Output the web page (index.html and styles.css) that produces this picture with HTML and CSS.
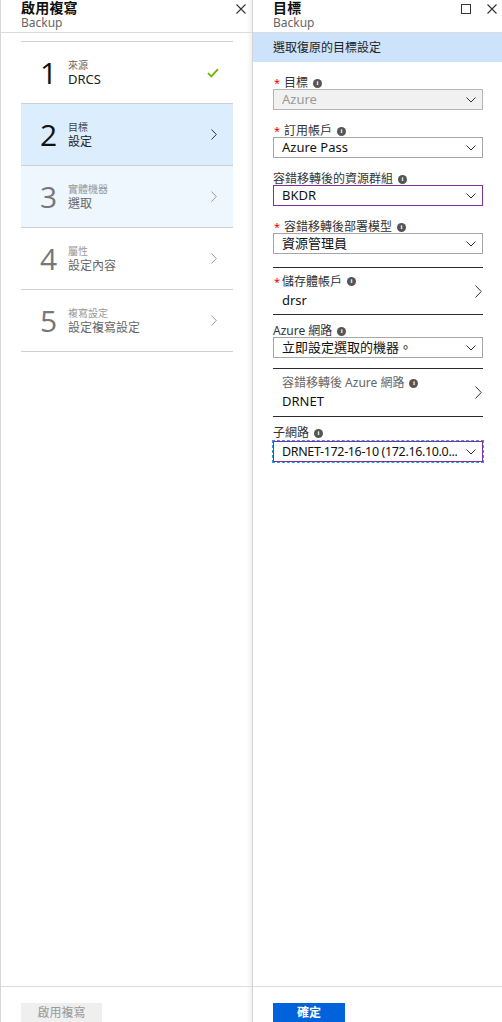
FILE: index.html
```html
<!DOCTYPE html>
<html lang="zh-Hant">
<head>
<meta charset="utf-8">
<link rel="stylesheet" href="styles.css">
</head>
<body>
<div class="app">
  <section class="blade blade-left">
    <header class="blade-head">
      <div class="titles">
        <div class="title">啟用複寫</div>
        <div class="subtitle">Backup</div>
      </div>
      <div class="head-icons">
        <svg class="ico-x" width="10" height="10" viewBox="0 0 10 10"><path d="M0.5 0.5 L9.5 9.5 M9.5 0.5 L0.5 9.5" stroke="#333" stroke-width="1.1" fill="none"/></svg>
      </div>
    </header>
    <div class="blade-body">
      <ul class="steps">
        <li class="step done">
          <span class="num">1</span>
          <span class="labels"><span class="l1">來源</span><span class="l2">DRCS</span></span>
          <svg class="check" width="12" height="10" viewBox="0 0 12 10"><path d="M1 5.2 L4.3 8.4 L11 1.2" stroke="#6bb700" stroke-width="1.8" fill="none"/></svg>
        </li>
        <li class="step active">
          <span class="num">2</span>
          <span class="labels"><span class="l1">目標</span><span class="l2">設定</span></span>
          <svg class="chev" width="6" height="11" viewBox="0 0 6 11"><path d="M0.5 0.5 L5.3 5.5 L0.5 10.5" stroke="#333" stroke-width="1" fill="none"/></svg>
        </li>
        <li class="step next">
          <span class="num">3</span>
          <span class="labels"><span class="l1">實體機器</span><span class="l2">選取</span></span>
          <svg class="chev" width="6" height="11" viewBox="0 0 6 11"><path d="M0.5 0.5 L5.3 5.5 L0.5 10.5" stroke="#999" stroke-width="1" fill="none"/></svg>
        </li>
        <li class="step off">
          <span class="num">4</span>
          <span class="labels"><span class="l1">屬性</span><span class="l2">設定內容</span></span>
          <svg class="chev" width="6" height="11" viewBox="0 0 6 11"><path d="M0.5 0.5 L5.3 5.5 L0.5 10.5" stroke="#999" stroke-width="1" fill="none"/></svg>
        </li>
        <li class="step off">
          <span class="num">5</span>
          <span class="labels"><span class="l1">複寫設定</span><span class="l2">設定複寫設定</span></span>
          <svg class="chev" width="6" height="11" viewBox="0 0 6 11"><path d="M0.5 0.5 L5.3 5.5 L0.5 10.5" stroke="#999" stroke-width="1" fill="none"/></svg>
        </li>
      </ul>
    </div>
    <footer class="blade-foot">
      <button class="btn btn-disabled">啟用複寫</button>
    </footer>
  </section>

  <section class="blade blade-right">
    <header class="blade-head">
      <div class="titles">
        <div class="title">目標</div>
        <div class="subtitle">Backup</div>
      </div>
      <div class="head-icons">
        <svg class="ico-sq" width="10" height="10" viewBox="0 0 10 10"><rect x="0.5" y="0.5" width="9" height="9" stroke="#333" stroke-width="1" fill="none"/></svg>
        <svg class="ico-x" width="10" height="10" viewBox="0 0 10 10"><path d="M0.5 0.5 L9.5 9.5 M9.5 0.5 L0.5 9.5" stroke="#333" stroke-width="1.1" fill="none"/></svg>
      </div>
    </header>
    <div class="blade-body">
      <div class="infobar">選取復原的目標設定</div>
      <div class="form">
        <div class="field">
          <div class="label"><span class="req">*</span>目標<span class="info">i</span></div>
          <div class="select disabled"><span class="val">Azure</span><svg class="dd" width="10" height="6" viewBox="0 0 10 6"><path d="M0.5 0.5 L5 5 L9.5 0.5" stroke="#333" stroke-width="1" fill="none"/></svg></div>
        </div>
        <div class="field">
          <div class="label"><span class="req">*</span>訂用帳戶<span class="info">i</span></div>
          <div class="select"><span class="val">Azure Pass</span><svg class="dd" width="10" height="6" viewBox="0 0 10 6"><path d="M0.5 0.5 L5 5 L9.5 0.5" stroke="#333" stroke-width="1" fill="none"/></svg></div>
        </div>
        <div class="field">
          <div class="label">容錯移轉後的資源群組<span class="info">i</span></div>
          <div class="select purple"><span class="val">BKDR</span><svg class="dd" width="10" height="6" viewBox="0 0 10 6"><path d="M0.5 0.5 L5 5 L9.5 0.5" stroke="#333" stroke-width="1" fill="none"/></svg></div>
        </div>
        <div class="field">
          <div class="label"><span class="req">*</span>容錯移轉後部署模型<span class="info">i</span></div>
          <div class="select"><span class="val">資源管理員</span><svg class="dd" width="10" height="6" viewBox="0 0 10 6"><path d="M0.5 0.5 L5 5 L9.5 0.5" stroke="#333" stroke-width="1" fill="none"/></svg></div>
        </div>
        <div class="navrow first">
          <div class="navtext">
            <div class="label"><span class="req abs">*</span>儲存體帳戶<span class="info">i</span></div>
            <div class="navval">drsr</div>
          </div>
          <svg class="navchev" width="7" height="13" viewBox="0 0 7 13"><path d="M0.5 0.5 L6.2 6.5 L0.5 12.5" stroke="#333" stroke-width="1" fill="none"/></svg>
        </div>
        <div class="field net">
          <div class="label">Azure 網路<span class="info">i</span></div>
          <div class="select"><span class="val">立即設定選取的機器。</span><svg class="dd" width="10" height="6" viewBox="0 0 10 6"><path d="M0.5 0.5 L5 5 L9.5 0.5" stroke="#333" stroke-width="1" fill="none"/></svg></div>
        </div>
        <div class="navrow second">
          <div class="navtext">
            <div class="label gray">容錯移轉後 Azure 網路<span class="info">i</span></div>
            <div class="navval">DRNET</div>
          </div>
          <svg class="navchev" width="7" height="13" viewBox="0 0 7 13"><path d="M0.5 0.5 L6.2 6.5 L0.5 12.5" stroke="#333" stroke-width="1" fill="none"/></svg>
        </div>
        <div class="field subnet">
          <div class="label">子網路<span class="info">i</span></div>
          <div class="select purple focus"><span class="val tight">DRNET-172-16-10 (172.16.10.0...</span><svg class="dd" width="10" height="6" viewBox="0 0 10 6"><path d="M0.5 0.5 L5 5 L9.5 0.5" stroke="#333" stroke-width="1" fill="none"/></svg></div>
        </div>
      </div>
    </div>
    <footer class="blade-foot">
      <button class="btn btn-primary">確定</button>
    </footer>
  </section>
</div>
</body>
</html>
```

FILE: styles.css
```css
* { box-sizing: border-box; margin: 0; padding: 0; }
html, body { width: 502px; height: 1022px; overflow: hidden; background: #fff; }
body {
  font-family: "Noto Sans", "Noto Sans CJK TC", sans-serif;
  color: #222;
}
.app { display: flex; height: 1022px; }
.blade { display: flex; flex-direction: column; height: 100%; position: relative; }
.blade-left {
  flex: none;
  width: 253px;
  border-left: 1px solid #d6d6d6;
  border-right: 1px solid #d4d4d4;
  box-shadow: inset -5px 0 4px -3px rgba(0,0,0,0.07);
}
.blade-right { flex: 1; min-width: 0; }

.blade-head {
  flex: none;
  height: 33px;
  border-bottom: 1px solid #dcdcdc;
  display: flex;
  justify-content: space-between;
  padding-left: 20px;
}
.titles { display: flex; flex-direction: column; }
.title { display: block; font-size: 14px; line-height: 17px; height: 17px; font-weight: 600; color: #111; letter-spacing: 0.2px; margin-top: -1px; }
.subtitle { display: block; font-size: 12px; line-height: 13px; height: 13px; color: #666; }
.head-icons { display: flex; gap: 16px; padding: 4px 6px 0 0; }
.blade-right .head-icons { padding-right: 5px; }

.blade-body { flex: 1; }
.blade-left .blade-body { padding: 8px 19px 0 20px; }

.steps { list-style: none; border-top: 1px solid #cfcfcf; }
.step {
  height: 62px;
  border-bottom: 1px solid #cfcfcf;
  display: flex;
  align-items: center;
  padding-left: 19px;
  padding-right: 16px;
}
.step.active { background: #dcedfd; }
.step.next { background: #eef6fe; }
.num {
  font-size: 30px;
  line-height: 30px;
  width: 28px;
  font-weight: 400;
  color: #111;
  font-family: "Open Sans", "Noto Sans", sans-serif;
}
.step.next .num, .step.off .num { color: #777; }
.labels { display: flex; flex-direction: column; flex: 1; }
.l1 { display: block; font-size: 10px; line-height: 13px; height: 13px; color: #666; }
.l2 { display: block; font-size: 12px; line-height: 15px; height: 15px; color: #222; }
.step.done .l2 { font-size: 13px; }
.step.active .l1 { color: #444; }
.step.next .l1, .step.off .l1 { color: #999; }
.step.next .l2, .step.off .l2 { color: #666; }
.check { margin-right: -2px; }

.blade-foot {
  flex: none;
  height: 36px;
  border-top: 1px solid #dcdcdc;
  padding: 13px 0 0 20px;
}
.btn {
  font-family: "Noto Sans", "Noto Sans CJK TC", sans-serif;
  font-size: 12px;
  height: 19px;
  line-height: 19px;
  border: none;
}
.btn-disabled { width: 81px; background: #efefef; color: #999; }
.btn-primary { width: 72px; background: #0063dc; color: #fff; font-weight: 700; }

.infobar {
  height: 29px;
  background: #cde2fb;
  font-size: 12px;
  line-height: 29px;
  padding-left: 20px;
  color: #222;
}
.form { padding: 13px 19px 0 20px; }
.field { margin-bottom: 13px; }
.label {
  font-size: 12px;
  line-height: 16px;
  height: 16px;
  color: #333;
  display: flex;
  align-items: center;
  margin-bottom: -3px;
  position: relative;
  white-space: nowrap;
}
.label.gray { color: #666; }
.req { color: #e00; font-size: 11px; margin-right: 4px; margin-left: 1px; }
.req.abs { position: absolute; left: -9px; top: 0; }
.info {
  display: inline-flex;
  justify-content: center;
  align-items: center;
  width: 9px;
  height: 9px;
  border-radius: 50%;
  background: #555;
  color: #fff;
  font-size: 7px;
  font-weight: 700;
  line-height: 9px;
  margin-left: 5px;
  font-family: "Liberation Serif", serif;
}
.select {
  height: 21px;
  border: 1px solid #a6a6a6;
  display: flex;
  align-items: center;
  justify-content: space-between;
  padding: 0 6px 0 8px;
  font-size: 13px;
  color: #111;
  background: #fff;
  margin-top: 1px;
}
.select .val { white-space: nowrap; overflow: hidden; line-height: 19px; }
.select .val.tight { letter-spacing: -0.35px; font-size: 12.5px; }
.select.disabled { background: #f1f1f1; color: #9a9a9a; border-color: #b5b5b5; }
.select.purple { border-color: #7f2f9f; }
.select.focus { outline: 1px dashed #2a9fdf; outline-offset: 0; }
.dd { flex: none; margin-top: 1px; margin-left: 4px; }

.navrow {
  border-top: 1px solid #2b2b2b;
  height: 47px;
  display: flex;
  align-items: center;
  padding-left: 9px;
  padding-right: 1px;
}
.navrow.first { margin-top: 1px; }
.navtext { flex: 1; }
.navval { font-size: 13px; line-height: 18px; color: #111; margin-top: 4px; }
.field.net {
  border-top: 1px solid #2b2b2b;
  padding-top: 8px;
  margin-bottom: 0;
  height: 54px;
}
.navrow.second { height: 48px; }
.field.subnet {
  border-top: 1px solid #2b2b2b;
  padding-top: 8px;
}
.field.subnet .select { margin-top: 3px; }
```
